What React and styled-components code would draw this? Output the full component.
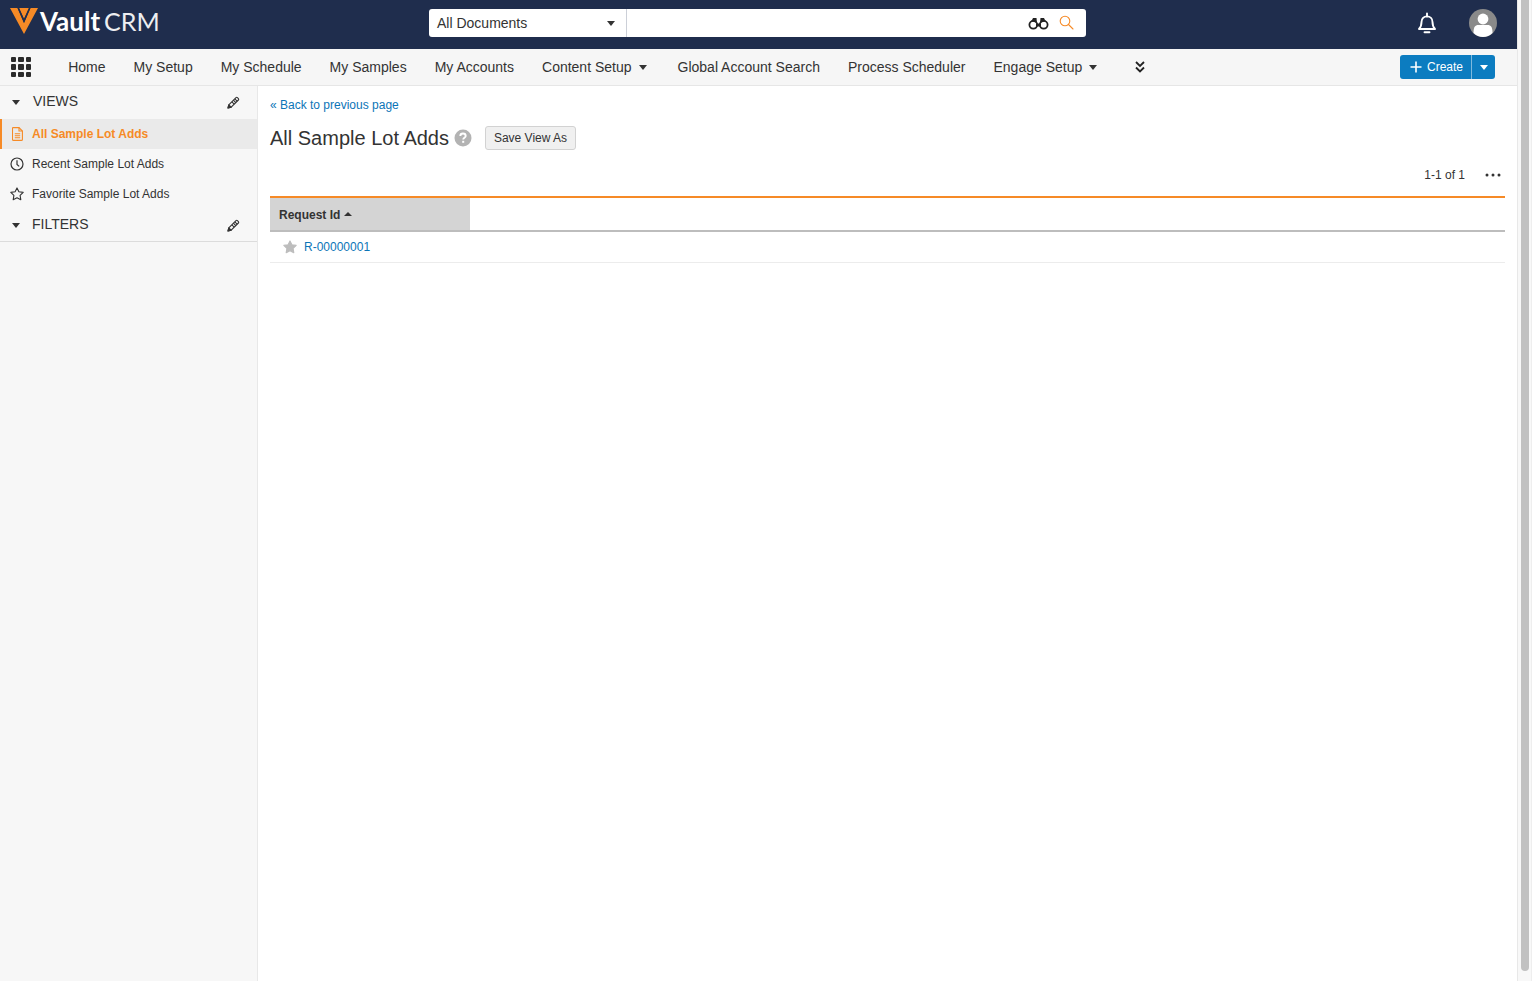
import React from "react";
import styled, { createGlobalStyle } from "styled-components";

const Global = createGlobalStyle`
  html, body { margin: 0; padding: 0; height: 100%; overflow: hidden; background: #fff; }
  body { font-family: "Liberation Sans", Arial, sans-serif; color: #333; }
  #root { height: 100%; }
`;

const Shell = styled.div`display: flex; width: 1532px; height: 981px; overflow: hidden;`;
const Page = styled.div`flex: 0 0 1517px; display: flex; flex-direction: column; min-width: 0;`;
const ScrollTrack = styled.div`
  flex: 0 0 15px; background: #f8f8f8; border-left: 1px solid #e8e8e8; border-right: 1px solid #eeeeee;
  box-sizing: border-box; padding: 0 2px 10px 3px; display: flex;
`;
const ScrollThumb = styled.div`flex: 1; background: #c1c1c1; border-radius: 0 0 4px 4px;`;

const TopBar = styled.header`
  height: 49px; flex: none; background: #1f2d4d; display: flex; align-items: flex-start; position: relative;
`;
const Brand = styled.div`
  width: 429px; flex: none; display: flex; align-items: flex-start; padding: 7px 0 0 10px; box-sizing: border-box;
`;
const BrandText = styled.div`
  margin-left: 2px; font-family: Lato, sans-serif; color: #fff; font-size: 26px; line-height: 30px; white-space: nowrap; margin-top: -1px;
`;
const BrandBold = styled.span`font-weight: 700;`;
const BrandLight = styled.span`font-weight: 400; font-size: 25px; margin-left: 4px; opacity: 0.92;`;
const SearchBox = styled.div`
  margin-top: 9px; width: 657px; height: 28px; background: #fff; border-radius: 3px; display: flex; align-items: center; flex: none;
`;
const Scope = styled.div`
  width: 198px; height: 100%; flex: none; box-sizing: border-box; border-right: 1px solid #ccd0d8;
  display: flex; align-items: center; justify-content: space-between; padding: 0 11px 0 8px; font-size: 14px; color: #333;
`;
const SearchIcons = styled.div`flex: 1; display: flex; justify-content: flex-end; align-items: center; gap: 10px; padding-right: 12px;`;
const TopRight = styled.div`flex: 1; display: flex; justify-content: flex-end; align-items: center; gap: 32px; padding: 9px 20px 0 0;`;

const NavBar = styled.nav`
  height: 37px; flex: none; box-sizing: border-box; background: #f6f6f6; border-bottom: 1px solid #e6e6e6;
  display: flex; align-items: center; padding: 0 22px 0 11px;
`;
const AppGrid = styled.div`
  display: grid; grid-template-columns: repeat(3, 5.4px); grid-auto-rows: 5.4px; gap: 2px; margin-right: 37px;
`;
const AppDot = styled.span`background: #2b2b2b; border-radius: 1px;`;
const NavItems = styled.div`display: flex; align-items: center; gap: 28px;`;
const NavItem = styled.a`
  font-size: 14px; color: #333; white-space: nowrap; display: flex; align-items: center; gap: 7px;
  ${p => p.$caret && "padding-right: 3px;"}
`;
const Caret = styled.span`
  width: 0; height: 0; border-left: 4.5px solid transparent; border-right: 4.5px solid transparent;
  border-top: 5px solid ${p => p.$color || "#333"}; display: inline-block; flex: none;
`;
const More = styled.div`margin-left: 35px; display: flex; align-items: center;`;
const CreateGroup = styled.div`
  margin-left: auto; height: 24px; display: flex; background: #0c7cc0; border-radius: 3px; color: #fff; font-size: 12px;
`;
const CreateMain = styled.div`
  display: flex; align-items: center; gap: 5px; padding: 0 8px 0 10px; border-right: 1px solid #7fb9dd;
`;
const CreateDrop = styled.div`width: 23px; display: flex; align-items: center; justify-content: center;`;

const Body = styled.div`flex: 1; display: flex; min-height: 0;`;
const Sidebar = styled.aside`
  width: 258px; flex: none; box-sizing: border-box; background: #f7f7f7; border-right: 1px solid #e8e8e8;
`;
const SectionHead = styled.div`
  height: ${p => p.$h}px; box-sizing: border-box; display: flex; align-items: center; padding: 0 17px 0 12px; font-size: 14px; color: #333;
  ${p => p.$last && "border-bottom: 1px solid #dcdcdc;"}
`;
const SectionTitle = styled.span`margin-left: ${p => p.$ml}px; margin-bottom: ${p => p.$lift}px; flex: 1;`;
const PencilSlot = styled.span`display: flex; margin-bottom: ${p => p.$lift || 0}px;`;
const ViewRow = styled.div`
  height: 30px; box-sizing: border-box; display: flex; align-items: center; font-size: 12px; gap: 8px; padding-left: ${p => p.$active ? 8 : 10}px;
  color: ${p => p.$active ? "#f68a26" : "#333"}; font-weight: ${p => p.$active ? 700 : 400};
  background: ${p => p.$active ? "#eaeaea" : "transparent"};
  border-left: ${p => p.$active ? "2px solid #f68a26" : "0"};
`;
const IconSlot = styled.span`width: 14px; display: flex; justify-content: center; flex: none;`;

const Main = styled.main`flex: 1; min-width: 0; padding: 12px 12px 0 12px; background: #fff;`;
const BackLink = styled.a`display: block; font-size: 12px; line-height: 14px; color: #0c75b7;`;
const TitleRow = styled.div`display: flex; align-items: center; margin-top: 13px; height: 26px;`;
const Title = styled.h1`margin: 0; font-size: 20px; line-height: 26px; font-weight: 400; color: #333;`;
const SaveButton = styled.button`
  margin-left: 13px; height: 24px; width: 91px; padding: 0; font: 12px "Liberation Sans", Arial, sans-serif; color: #333;
  background: #f0f0f0; border: 1px solid #d2d2d2; border-radius: 3px;
`;
const ListMeta = styled.div`
  display: flex; justify-content: flex-end; align-items: center; gap: 20px; height: 20px; margin-top: 14px; padding-right: 4px; font-size: 12px; color: #333;
`;
const Table = styled.div`margin-top: 11px; border-top: 2px solid #f68a26;`;
const HeadRow = styled.div`height: 34px; box-sizing: border-box; border-bottom: 2px solid #bdbdbd; display: flex;`;
const HeadCell = styled.div`
  width: 200px; background: #d4d4d4; box-sizing: border-box; padding: 2px 0 0 9px; display: flex; align-items: center; gap: 4px;
  font-size: 12px; font-weight: 700; color: #333;
`;
const CaretUp = styled.span`
  width: 0; height: 0; border-left: 4px solid transparent; border-right: 4px solid transparent; border-bottom: 4px solid #333; margin-top: -3px;
`;
const Row = styled.div`
  height: 31px; box-sizing: border-box; border-bottom: 1px solid #ececec; display: flex; align-items: center; padding-left: 13px; gap: 7px;
`;
const RecordLink = styled.a`font-size: 12px; color: #0c75b7;`;

const Logo = () => (
  <svg width="28" height="28" viewBox="0 0 28 28">
    <path d="M0 1h7.500L14 16 20.500 1H28L14 27z" fill="#f68a26" />
    <path d="M9 1h10L14 12z" fill="#f68a26" />
    <path d="M7.500 1h1.600L14 12l4.900-11h1.600L14 16z" fill="#1f2d4d" />
  </svg>
);
const Binoculars = () => (
  <svg width="21" height="13" viewBox="0 0 21 13" fill="none">
    <circle cx="5.300" cy="7.800" r="3.900" stroke="#222" strokeWidth="1.800" />
    <circle cx="15.700" cy="7.800" r="3.900" stroke="#222" strokeWidth="1.800" />
    <path d="M8 6.500h5v3H8z" fill="#222" />
    <path d="M3.500 4l1.500-3h3.500l.5 5zM17.500 4L16 1h-3.500l-.5 5z" fill="#222" />
  </svg>
);
const Magnifier = () => (
  <svg width="15" height="15" viewBox="0 0 15 15" fill="none" stroke="#f68a26" strokeWidth="1.100" strokeLinecap="round" style={{ marginTop: -2 }}>
    <circle cx="6" cy="6" r="4.800" />
    <path d="M9.500 9.500L14 14" />
  </svg>
);
const Bell = () => (
  <svg width="20" height="22" viewBox="0 0 20 22" fill="none" stroke="#fff" strokeWidth="1.900" strokeLinejoin="round">
    <path d="M2 17c2-2 2.500-3.500 2.500-7 0-3.400 2.400-5.600 5.500-5.600s5.500 2.200 5.500 5.600c0 3.500.5 5 2.500 7z" />
    <path d="M10 1.500v3" strokeLinecap="round" />
    <path d="M7.500 20.300h5" strokeLinecap="round" />
  </svg>
);
const Avatar = () => (
  <svg width="28" height="28" viewBox="0 0 28 28">
    <circle cx="14" cy="14" r="14" fill="#8a8a8a" />
    <circle cx="14" cy="10" r="5.400" fill="#fff" />
    <path d="M4.500 24c0-6 1.500-8 5-8h9c3.500 0 5 2 5 8-2.500 2.500-6 4-9.500 4S7 26.500 4.500 24z" fill="#fff" />
  </svg>
);
const DoubleChevron = () => (
  <svg width="10" height="12" viewBox="0 0 10 12" fill="none" stroke="#222" strokeWidth="1.800">
    <path d="M1 1l4 4 4-4M1 6.500l4 4 4-4" />
  </svg>
);
const Plus = () => (
  <svg width="12" height="12" viewBox="0 0 12 12" stroke="#fff" strokeWidth="1.600"><path d="M6 .5v11M.5 6h11" /></svg>
);
const Pencil = () => (
  <svg width="13" height="13" viewBox="0 0 13 13" fill="none" stroke="#333" strokeWidth="1.100" strokeLinejoin="round">
    <path d="M1 12l.8-3.200L9 1.600a1 1 0 0 1 1.400 0l1 1a1 1 0 0 1 0 1.400L4.200 11.200z" />
    <path d="M7.800 2.800l2.400 2.400M6.400 4.200l2.400 2.400M4.900 5.800l2.300 2.300" />
    <path d="M1 12l.8-3.200 2.400 2.400z" fill="#333" />
  </svg>
);
const DocIcon = () => (
  <svg width="11" height="14" viewBox="0 0 11 14" fill="none" stroke="#f68a26" strokeWidth="1.100">
    <path d="M1 .6h6l3.400 3.400v8.400a1 1 0 0 1-1 1H1.500a1 1 0 0 1-1-1V1.100z" />
    <path d="M7 .6V4h3.400M2.800 6.800h5.400M2.800 8.800h5.400M2.800 10.800h5.400" />
  </svg>
);
const ClockIcon = () => (
  <svg width="14" height="14" viewBox="0 0 14 14" fill="none" stroke="#333" strokeWidth="1.200">
    <circle cx="7" cy="7" r="6" /><path d="M7 3.300V7.500l2.200 1.900" />
  </svg>
);
const StarPath = "M7 .9l1.900 3.900 4.300.6-3.100 3 .7 4.300L7 10.700l-3.800 2 .7-4.300-3.100-3 4.300-.6z";
const StarIcon = ({ solid }) => (
  <svg width="14" height="14" viewBox="0 0 14 14" fill={solid ? "#bdbdbd" : "none"} stroke={solid ? "#bdbdbd" : "#333"} strokeWidth="1.100" strokeLinejoin="round">
    <path d={StarPath} />
  </svg>
);
const HelpIcon = () => (
  <svg width="18" height="18" viewBox="0 0 18 18" style={{ marginLeft: 5 }}>
    <circle cx="9" cy="9" r="8.500" fill="#b3b3b3" />
    <path d="M6.300 7a2.700 2.500 0 0 1 5.400 0c0 1.700-2.500 1.800-2.500 3.500" fill="none" stroke="#fff" strokeWidth="1.900" />
    <rect x="8.200" y="11.800" width="2" height="2" fill="#fff" />
  </svg>
);
const Ellipsis = () => (
  <svg width="16" height="4" viewBox="0 0 16 4" fill="#333">
    <circle cx="2" cy="2" r="1.500" /><circle cx="8" cy="2" r="1.500" /><circle cx="14" cy="2" r="1.500" />
  </svg>
);

const navItems = [
  { label: "Home" }, { label: "My Setup" }, { label: "My Schedule" }, { label: "My Samples" }, { label: "My Accounts" },
  { label: "Content Setup", caret: true }, { label: "Global Account Search" }, { label: "Process Scheduler" }, { label: "Engage Setup", caret: true },
];

export default function App() {
  return (
    <Shell>
      <Global />
      <Page>
        <TopBar>
          <Brand>
            <Logo />
            <BrandText><BrandBold>Vault</BrandBold><BrandLight>CRM</BrandLight></BrandText>
          </Brand>
          <SearchBox>
            <Scope>All Documents<Caret /></Scope>
            <SearchIcons><Binoculars /><Magnifier /></SearchIcons>
          </SearchBox>
          <TopRight><Bell /><Avatar /></TopRight>
        </TopBar>
        <NavBar>
          <AppGrid>{Array.from({ length: 9 }, (_, i) => <AppDot key={i} />)}</AppGrid>
          <NavItems>
            {navItems.map(n => <NavItem key={n.label} $caret={n.caret}>{n.label}{n.caret && <Caret />}</NavItem>)}
          </NavItems>
          <More><DoubleChevron /></More>
          <CreateGroup>
            <CreateMain><Plus />Create</CreateMain>
            <CreateDrop><Caret $color="#fff" /></CreateDrop>
          </CreateGroup>
        </NavBar>
        <Body>
          <Sidebar>
            <SectionHead $h={33}><Caret /><SectionTitle $ml={13} $lift={3}>VIEWS</SectionTitle><PencilSlot $lift={1}><Pencil /></PencilSlot></SectionHead>
            <ViewRow $active><IconSlot><DocIcon /></IconSlot>All Sample Lot Adds</ViewRow>
            <ViewRow><IconSlot><ClockIcon /></IconSlot>Recent Sample Lot Adds</ViewRow>
            <ViewRow><IconSlot><StarIcon /></IconSlot>Favorite Sample Lot Adds</ViewRow>
            <SectionHead $h={33} $last><Caret /><SectionTitle $ml={12} $lift={2}>FILTERS</SectionTitle><PencilSlot><Pencil /></PencilSlot></SectionHead>
          </Sidebar>
          <Main>
            <BackLink>« Back to previous page</BackLink>
            <TitleRow>
              <Title>All Sample Lot Adds</Title>
              <HelpIcon />
              <SaveButton>Save View As</SaveButton>
            </TitleRow>
            <ListMeta>1-1 of 1<Ellipsis /></ListMeta>
            <Table>
              <HeadRow><HeadCell>Request Id<CaretUp /></HeadCell></HeadRow>
              <Row><StarIcon solid /><RecordLink>R-00000001</RecordLink></Row>
            </Table>
          </Main>
        </Body>
      </Page>
      <ScrollTrack><ScrollThumb /></ScrollTrack>
    </Shell>
  );
}
